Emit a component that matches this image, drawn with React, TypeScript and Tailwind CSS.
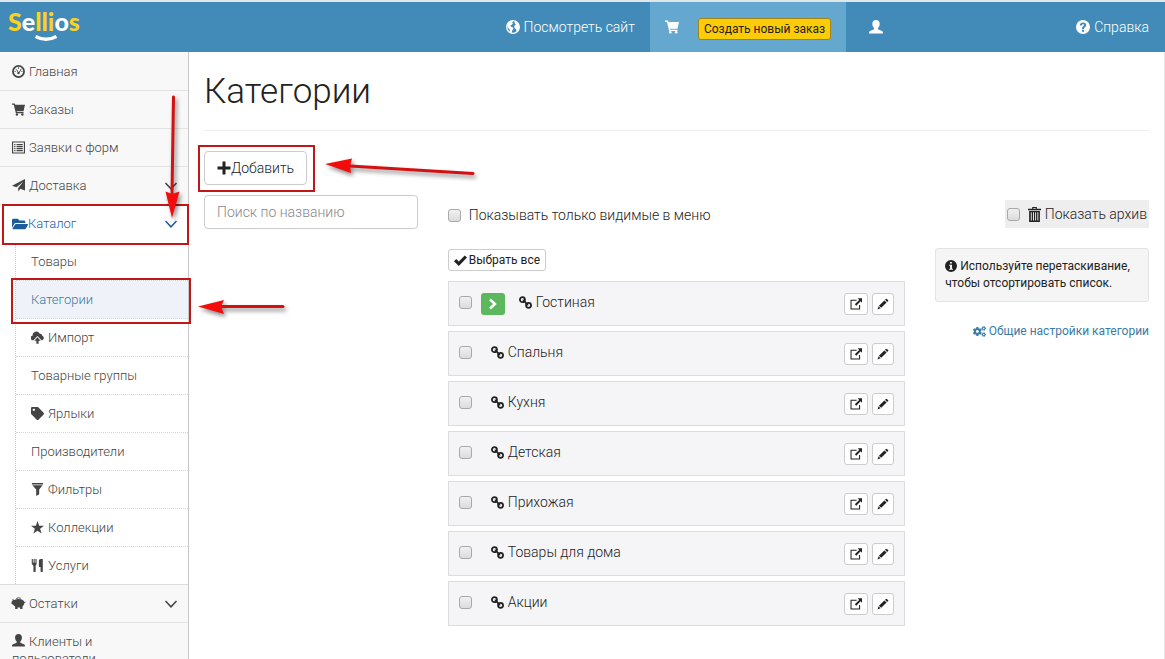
import React from "react";
import { FaFolderOpen, FaTag, FaCogs } from "react-icons/fa";

type IconProps = { className?: string };

const Glyph = ({ className = "size-[13px]", children }: IconProps & { children: React.ReactNode }) => (
  <svg viewBox="0 0 14 14" fill="currentColor" aria-hidden="true" className={`shrink-0 ${className}`}>
    {children}
  </svg>
);

const Dashboard = (p: IconProps) => (
  <Glyph {...p}>
    <circle cx="7" cy="7" r="6" fill="none" stroke="currentColor" strokeWidth="1.9" />
    <path d="M7 2.6v1.6M3.9 4.2l1 1M10.1 4.2l-1 1M2.8 7h1.2M11.2 7H10M5.2 5.2L7 9l2.6-4" fill="none" stroke="currentColor" strokeWidth="1" />
    <circle cx="7" cy="8.8" r="1.2" />
  </Glyph>
);
const Cart = (p: IconProps) => (
  <Glyph {...p}>
    <path d="M0 .5h2.900l.6 1.500H14l-1.600 6.800H5l.3.900h7.100v1.300H4.200L1.900 1.900H0z" />
    <circle cx="5.300" cy="12.300" r="1.300" />
    <circle cx="11.200" cy="12.300" r="1.300" />
  </Glyph>
);
const ListAlt = (p: IconProps) => (
  <Glyph {...p}>
    <path d="M.6 1.100h12.800v11.800H.6z" fill="none" stroke="currentColor" strokeWidth="1.200" />
    <path d="M2.400 3.200h1.300v1.300H2.400zm2.500 0h6.700v1.300H4.900zM2.400 5.400h1.300v1.300H2.400zm2.500 0h6.700v1.300H4.900zM2.400 7.600h1.300v1.300H2.400zm2.500 0h6.700v1.300H4.900zM2.400 9.800h1.300v1.300H2.400zm2.500 0h6.700v1.300H4.900z" />
  </Glyph>
);
const Send = (p: IconProps) => (
  <Glyph {...p}>
    <path d="M14 0v12.400l-5-1.900-2.300 2.900V9.700L12 3 4.800 8.900 0 7.300z" />
  </Glyph>
);
const CloudUp = (p: IconProps) => (
  <Glyph {...p}>
    <path d="M2.400 9.900A2.400 2.400 0 0 1 1.700 5A4 4 0 0 1 9.200 2.700a3.200 3.200 0 0 1 3.200 2.800 2.300 2.300 0 0 1-.5 4.400H11.300L7 5.300 2.700 9.900z" />
    <path d="M7 6.600l3.400 4H8.200V13.800H5.800v-3.200H3.600z" />
  </Glyph>
);
const Funnel = (p: IconProps) => (
  <Glyph {...p}>
    <path d="M1 0h12v1.500H1zM1.500 2.300h11L8.800 7v5L5.600 14V7z" />
  </Glyph>
);
const Star = (p: IconProps) => (
  <Glyph {...p}>
    <path d="M7 0l1.800 5H14L9.800 8.300l1.600 5.200L7 10.400l-4.400 3.100 1.600-5.200L0 5h5.200z" />
  </Glyph>
);
const Cutlery = (p: IconProps) => (
  <Glyph {...p}>
    <path d="M.8 0h1.200v4h.8V0h1.200v4h.8V0H6v5.500L5 7.200V13a1.100 1.100 0 0 1-2.400 0V7.200L.8 5.500zM8.500 1.500C8.500.5 10 0 12.700 0v13a1.100 1.100 0 0 1-2.400 0V8.500H8.500z" />
  </Glyph>
);
const Piggy = (p: IconProps) => (
  <svg viewBox="0 0 16 14" fill="currentColor" aria-hidden="true" className={`shrink-0 ${p.className}`}>
    <path d="M1.200 2.200L3.600 3.300C4.300 2.800 5 2.500 5.900 2.300A6 3 0 0 1 10.600 2.500C13 3 14 4.500 14.200 5.700c.5 0 .8-.3.700-1 .9.300.900 1.900-.7 2.100-.1 1.500-.9 2.700-1.900 3.400v2.600H9.800v-1.600H6.900v1.600H4.400v-2.600C3.400 9.600 2.800 9 2.400 8.300L.5 7.600V4.900l1.300-.5z" />
    <path d="M5.500 1.600Q8 .3 10.500 1.300" fill="none" stroke="currentColor" strokeWidth="1" />
  </svg>
);
const User = (p: IconProps) => (
  <Glyph {...p}>
    <path d="M7 0c2.300 0 3.700 1.500 3.700 3.700 0 1.700-.7 3.300-1.700 4.200v1.400l3.800 1.700c.8.400 1.200.9 1.200 2.400H0c0-1.500.4-2 1.200-2.400L5 9.300V7.900C4 7 3.300 5.400 3.300 3.700 3.300 1.500 4.700 0 7 0z" />
  </Glyph>
);
const Globe = (p: IconProps) => (
  <Glyph {...p}>
    <circle cx="7" cy="7" r="6.300" fill="none" stroke="currentColor" strokeWidth="1.300" />
    <path d="M.8 5L3 1.800 5.500.8l1.800.7-1.300 1L7 3.500 5.500 5l-1.200.3.800 1.500 2 .8.300 1.300-1.300 1.600-.3 2.400-1.700-.7-.5-2.700L1.800 7.200zM9 1l3 2 1.500 4-1 3.500-2 1.500-.3-2.700L8.500 8l-.3-2 1.600-1.500L8.500 3z" />
  </Glyph>
);
const Question = (p: IconProps) => (
  <Glyph {...p}>
    <path fillRule="evenodd" d="M7 0a7 7 0 1 1 0 14A7 7 0 0 1 7 0zM6 9.800v2h2v-2zM3.900 5.500h2C5.900 4.600 6.300 4.200 7 4.200s1.100.4 1.100.9C8.100 6.200 6 6.200 6 8.900h1.900c0-1.700 2.300-1.700 2.300-3.900C10.200 3.500 9 2.400 7 2.400S3.900 3.600 3.900 5.500z" />
  </Glyph>
);
const Info = (p: IconProps) => (
  <Glyph {...p}>
    <path fillRule="evenodd" d="M7 0a7 7 0 1 1 0 14A7 7 0 0 1 7 0zM5.900 2.200v2h2.200v-2zM4.800 5.400v1.200h1.100v3.600H4.800v1.300h4.500v-1.300H8.200V5.400z" />
  </Glyph>
);
const Plus = (p: IconProps) => (
  <Glyph {...p}>
    <path d="M5.500.5h3v5h5v3h-5v5h-3v-5h-5v-3h5z" />
  </Glyph>
);
const Check = (p: IconProps) => (
  <Glyph {...p}>
    <path d="M0 7.800L2.400 5.400 5.200 8.100 11.600 1.500 14 3.900 5.200 12.800z" />
  </Glyph>
);
const LinkIcon = (p: IconProps) => (
  <Glyph {...p}>
    <circle cx="3.700" cy="4" r="2.700" fill="none" stroke="currentColor" strokeWidth="1.900" />
    <circle cx="10.300" cy="10" r="2.700" fill="none" stroke="currentColor" strokeWidth="1.900" />
    <path d="M4 4.300C7 4.300 7 9.700 10 9.700" fill="none" stroke="currentColor" strokeWidth="1.800" />
  </Glyph>
);
const NewWindow = (p: IconProps) => (
  <Glyph {...p}>
    <path d="M7.800 2.700H1.200v10.100h10V8.200" fill="none" stroke="currentColor" strokeWidth="1.200" />
    <path d="M9 .3H14v5.200L12.400 3.900 7.300 8.900 5.700 7.300l5-5z" />
  </Glyph>
);
const Pencil = (p: IconProps) => (
  <Glyph {...p}>
    <path d="M11.200.8l2.200 2.200-1.500 1.600-2.600-2.500zM8.600 2.800l2.600 2.500-6.300 6.200-2.600-2.500zM1.900 9.700l2.300 2.300L.6 13.400z" />
  </Glyph>
);
const Trash = (p: IconProps) => (
  <svg viewBox="0 0 14 16" fill="currentColor" aria-hidden="true" className={`shrink-0 ${p.className}`}>
    <path fillRule="evenodd" d="M4.500 1.800V0h5v1.800H14v1.700H0V1.800zm1.200 0h2.600v-.7H5.700zM1.200 4.200h11.600V16H1.200zM3 5.500v9h1v-9zm2.400 0v9h1v-9zm2.300 0v9h1v-9zm2.400 0v9h1v-9z" />
  </svg>
);
const ChevronDown = () => (
  <svg viewBox="0 0 14 10" fill="none" stroke="currentColor" strokeWidth="1.500" aria-hidden="true" className="h-[10px] w-[14px] shrink-0">
    <path d="M1.500 2L7 7.800 12.500 2" />
  </svg>
);

type NavItem = { label: string; icon?: React.ReactNode; chevron?: boolean };

const topNav: NavItem[] = [
  { label: "Главная", icon: <Dashboard /> },
  { label: "Заказы", icon: <Cart /> },
  { label: "Заявки с форм", icon: <ListAlt /> },
  { label: "Доставка", icon: <Send />, chevron: true },
];

const catalogNav: NavItem[] = [
  { label: "Товары" },
  { label: "Категории" },
  { label: "Импорт", icon: <CloudUp /> },
  { label: "Товарные группы" },
  { label: "Ярлыки", icon: <FaTag className="size-[13px]" /> },
  { label: "Производители" },
  { label: "Фильтры", icon: <Funnel /> },
  { label: "Коллекции", icon: <Star /> },
  { label: "Услуги", icon: <Cutlery /> },
];

const categories = ["Гостиная", "Спальня", "Кухня", "Детская", "Прихожая", "Товары для дома", "Акции"];

const checkbox =
  "size-[13px] shrink-0 appearance-none rounded-[3px] border border-[#a9a9a9] bg-linear-to-b from-[#f0f0f0] to-[#dcdcdc] checked:bg-[#428bca]";
const smallButton = "flex h-[22px] items-center justify-center rounded-[3px] border border-[#ccc] bg-white text-[#222]";

function SideLink({ item }: { item: NavItem }) {
  return (
    <a href="#" className="flex items-center gap-[4px] border-b border-[#e3e3e3] bg-[#f8f8f8] py-[10px] pr-[10px] pl-3">
      {item.icon}
      <span className="grow">{item.label}</span>
      {item.chevron && <ChevronDown />}
    </a>
  );
}

function Sidebar() {
  return (
    <nav className="w-[189px] shrink-0 border-r border-[#c8c8c8] pt-px text-[13px] leading-[17px] text-[#444]">
      {topNav.map((item) => (
        <SideLink key={item.label} item={item} />
      ))}
      <a href="#" className="flex items-center border-b border-white py-[10px] pr-[10px] pl-3 text-[#1c5c9c]">
        <FaFolderOpen className="size-4" />
        <span className="grow">Каталог</span>
        <ChevronDown />
      </a>
      <div className="border-b border-[#dcdcdc] pl-[15px]">
        <div className="border-l border-dotted border-[#ccc]">
          {catalogNav.map((item, i) => (
            <a
              key={item.label}
              href="#"
              className={`flex items-center gap-[4px] border-dotted border-[#d4d4d4] py-[10px] pl-[15px] ${
                i < catalogNav.length - 1 ? "border-b" : ""
              } ${item.label === "Категории" ? "bg-[#eff3f9] text-[#337ba5]" : ""}`}
            >
              {item.icon}
              {item.label}
            </a>
          ))}
        </div>
      </div>
      <SideLink item={{ label: "Остатки", icon: <Piggy className="-mx-px h-[13px] w-[15px]" />, chevron: true }} />
      <a href="#" className="block bg-[#f8f8f8] py-[10px] pr-12 pl-3">
        <User className="mr-[4px] inline-block size-[13px] align-[-1px]" />
        Клиенты и пользователи
      </a>
    </nav>
  );
}

function Header() {
  return (
    <header className="flex h-[52px] items-stretch justify-between border-t-2 border-[#dfe6ea] bg-[#428bb8] text-[14px] text-white">
      <a href="#" aria-label="Sellios" className="flex flex-col pt-[5px] pl-2 font-['Lato'] text-[25px] leading-[28px] font-black">
        <span className="text-[#fcd21c]">
          S<span className="text-white">e</span>lli<span className="text-white">o</span>s
        </span>
        <svg viewBox="0 0 24 7" className="ml-[26px] h-[7px] w-6" aria-hidden="true">
          <path d="M1.500 1.500Q12 7 22.500 1.500" fill="none" stroke="white" strokeWidth="3.400" />
        </svg>
      </a>
      <div className="flex grow items-stretch justify-end">
        <a href="#" className="flex items-center gap-[4px] px-[15px]">
          <Globe className="size-[14px]" />
          Посмотреть сайт
        </a>
        <div className="flex items-center gap-[19px] bg-[#64a8d0] px-[15px]">
          <Cart className="size-[14px]" />
          <button type="button" className="mt-1 h-[22px] rounded-[3px] border border-[#a08418] bg-[#fdcc08] px-[5px] text-[12px] font-normal text-[#222]">
            Создать новый заказ
          </button>
        </div>
        <a href="#" aria-label="Профиль" className="mr-[170px] flex items-center px-[23px]">
          <User className="size-[14px]" />
        </a>
        <a href="#" className="flex items-center gap-[4px] pr-4">
          <Question className="size-[14px]" />
          Справка
        </a>
      </div>
    </header>
  );
}

function CategoryRow({ name, expandable }: { name: string; expandable: boolean }) {
  return (
    <li className="flex h-[45px] items-center border border-[#dcdcde] bg-[#f5f5f8] pr-[10px] pl-[10px]">
      <input type="checkbox" aria-label={name} className={`${checkbox} mb-[3px]`} />
      {expandable && (
        <button type="button" aria-label="Развернуть" className="ml-[9px] flex h-[22px] w-6 items-center justify-center rounded-[3px] bg-[#5cb85c] text-white">
          <svg viewBox="0 0 10 12" className="h-3 w-[10px]" fill="none" stroke="currentColor" strokeWidth="2.400" aria-hidden="true">
            <path d="M2 1.500L7 6 2 10.500" />
          </svg>
        </button>
      )}
      <span className={`flex grow items-center gap-[4px] pb-[3px] ${expandable ? "pl-[14px]" : "pl-[19px]"}`}>
        <LinkIcon className="size-[13px]" />
        {name}
      </span>
      <div className="flex gap-1">
        <button type="button" aria-label="Открыть" className={`${smallButton} w-6`}>
          <NewWindow className="size-[12px]" />
        </button>
        <button type="button" aria-label="Изменить" className={`${smallButton} w-[22px]`}>
          <Pencil className="size-[12px]" />
        </button>
      </div>
    </li>
  );
}

function Annotations() {
  return (
    <div className="pointer-events-none absolute inset-0 overflow-hidden" aria-hidden="true">
      <div className="absolute top-[204px] left-[2px] h-[41px] w-[187px] border-2 border-[#c01818]" />
      <div className="absolute top-[278px] left-[11px] h-[46px] w-[180px] border-2 border-[#c01818]" />
      <div className="absolute top-[145px] left-[198px] h-[47px] w-[117px] border-2 border-[#c01818]" />
      <svg viewBox="0 0 500 330" className="absolute top-0 left-0 h-[330px] w-[500px] drop-shadow-[2px_3px_2px_rgba(0,0,0,0.45)]">
        <g stroke="#d41010" strokeWidth="3" strokeLinecap="round">
          <path d="M173.500 97L172 195" />
          <path d="M473 173.500L350 166" />
          <path d="M283 306.500H220" />
        </g>
        <g fill="#f40c0c">
          <path d="M172 218L165.500 191.500L172 194L179.500 191.500Z" />
          <path d="M325 164L352 158.500L350 166L351 173Z" />
          <path d="M198 306.500L224 300L221 306.500L224 314Z" />
        </g>
      </svg>
    </div>
  );
}

export default function App() {
  return (
    <div className="relative h-screen overflow-hidden bg-white font-['Roboto','Liberation_Sans',sans-serif] text-[14px] leading-5 font-light text-[#222]">
      <Header />
      <div className="flex">
        <Sidebar />
        <main className="min-w-0 grow border-r border-[#e6e6e6] px-[15px]">
          <h1 className="border-b border-[#eee] pt-5 pb-[18px] text-[35px] leading-[40px]">Категории</h1>
          <button type="button" className="mt-5 flex h-[34px] items-center rounded-[4px] border border-[#ccc] px-3">
            <Plus className="size-[14px]" />
            Добавить
          </button>
          <div className="mt-[10px] grid grid-cols-4 gap-x-[30px]">
            <div>
              <input
                type="text"
                aria-label="Поиск по названию"
                placeholder="Поиск по названию"
                className="h-[34px] w-full rounded-[4px] border border-[#ccc] px-3 placeholder:text-[#888]"
              />
            </div>
            <div className="col-span-2">
              <label className="mt-[10px] flex h-5 items-center gap-2">
                <input type="checkbox" className={checkbox} />
                Показывать только видимые в меню
              </label>
              <button type="button" className="mt-[24px] flex h-[22px] items-center gap-[2px] rounded-[3px] border border-[#ccc] px-[5px] text-[12px] font-normal">
                <Check className="size-[13px]" />
                Выбрать все
              </button>
              <ul className="mt-[10px] flex flex-col gap-[5px]">
                {categories.map((name, i) => (
                  <CategoryRow key={name} name={name} expandable={i === 0} />
                ))}
              </ul>
            </div>
            <div className="flex flex-col items-end">
              <label className="mt-[5px] flex h-7 items-center bg-[#eee] px-[2px]">
                <input type="checkbox" className={`${checkbox} mr-2`} />
                <Trash className="mr-1 h-[15px] w-[13px]" />
                Показать архив
              </label>
              <p className="mt-5 w-full rounded-[3px] border border-[#e3e3e3] bg-[#f5f5f5] px-[9px] py-[9px] text-[12px] leading-[17px] font-normal">
                <Info className="mr-[3px] inline-block size-[12px] align-[-2px]" />
                Используйте перетаскивание, чтобы отсортировать список.
              </p>
              <a href="#" className="mt-[19px] flex items-center gap-[3px] text-[12px] font-normal text-[#3a7ca5]">
                <FaCogs className="size-[13px]" />
                Общие настройки категории
              </a>
            </div>
          </div>
        </main>
      </div>
      <Annotations />
    </div>
  );
}
